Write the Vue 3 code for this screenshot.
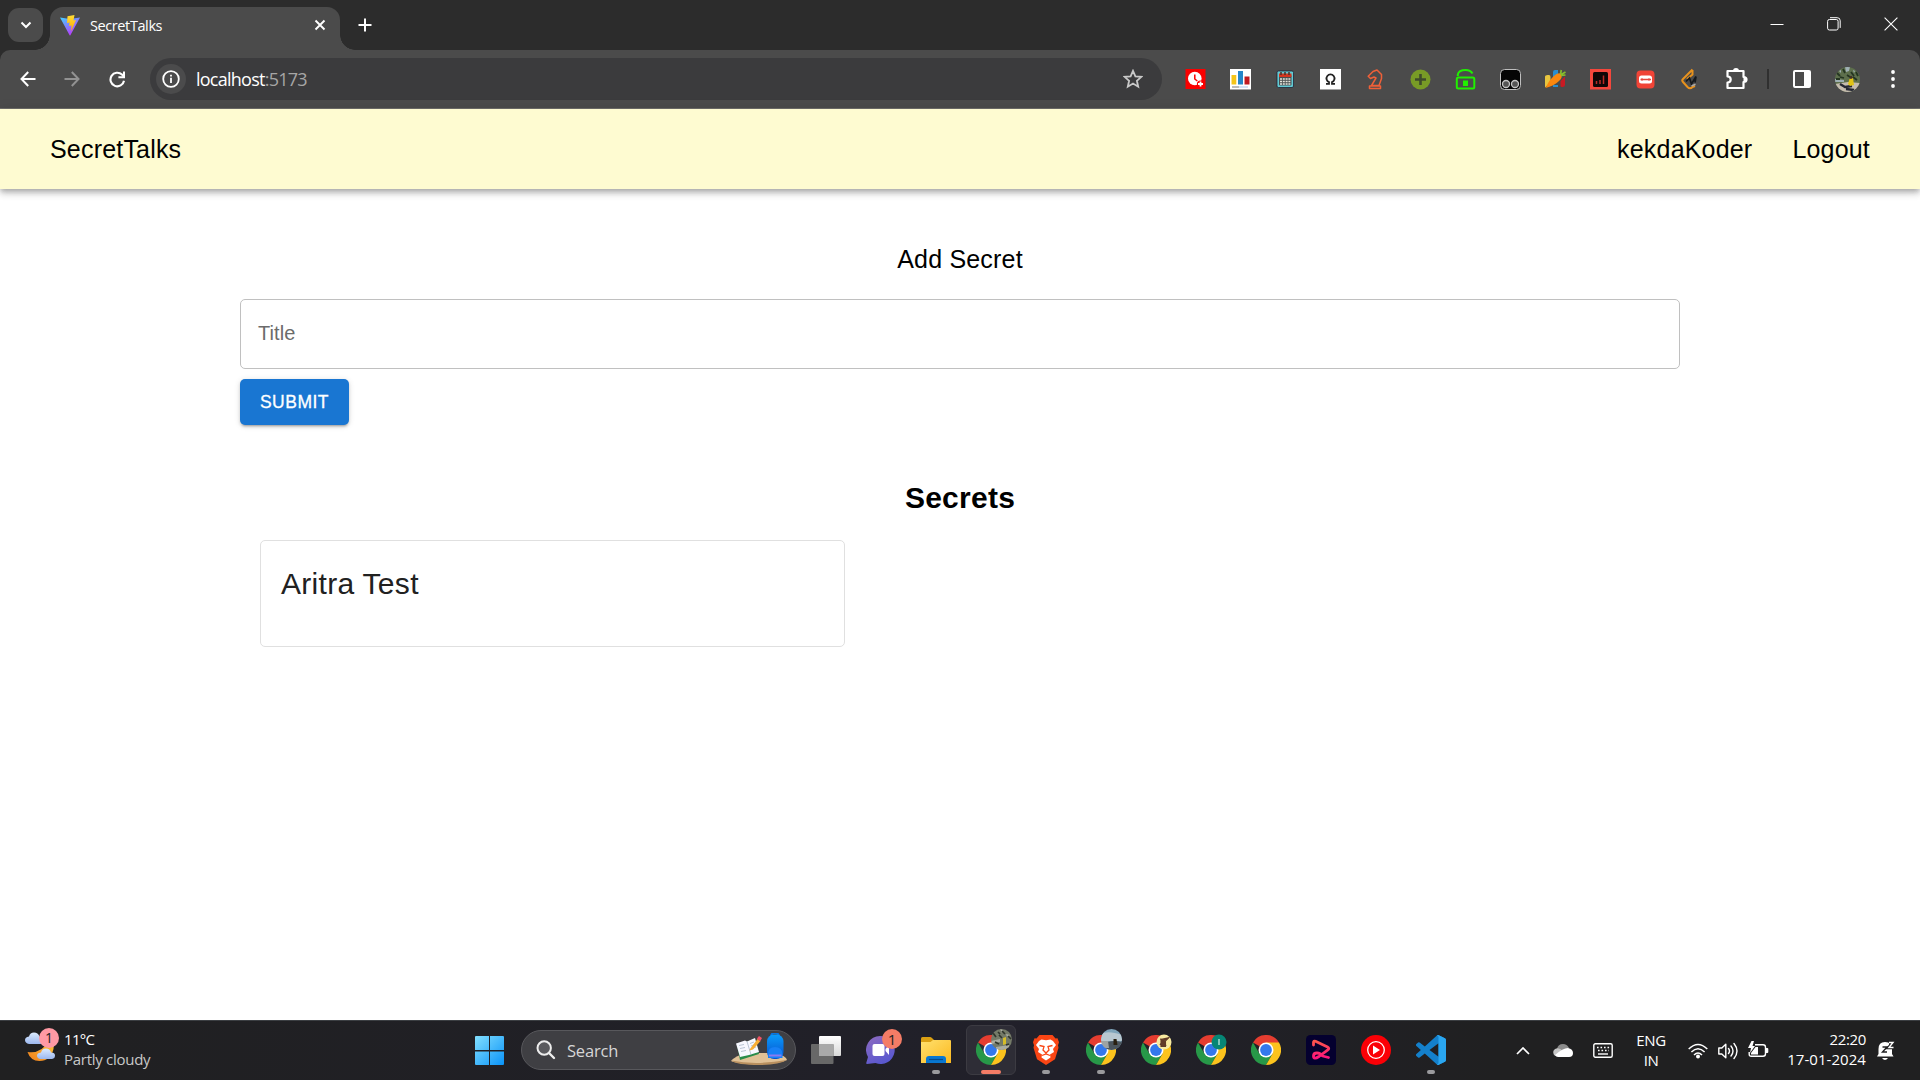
<script setup>
const tasks = [
  { id: 'view' },
  { id: 'chat' },
  { id: 'files', run: true },
  { id: 'chrome', badge: 'park', active: true },
  { id: 'brave', run: true },
  { id: 'chrome', badge: 'sky', run: true },
  { id: 'chrome', badge: 'cream' },
  { id: 'chrome', badge: 'teal' },
  { id: 'chrome' },
  { id: 'resso' },
  { id: 'ytm' },
  { id: 'code', run: true }
]
</script>

<template>
  <div class="screen">
    <header class="tabstrip">
      <button class="tabsearch">
        <svg width="12" height="8" viewBox="0 0 12 8"><path d="M1.500 1.500 6 6l4.500-4.500" fill="none" stroke="#fff" stroke-width="2" /></svg>
      </button>
      <div class="tab">
        <svg class="vite" width="20" height="21" viewBox="0 0 20 21">
          <defs>
            <linearGradient id="va" x1="0" y1="0" x2="0.6" y2="1"><stop offset="0" stop-color="#41d1ff" /><stop offset="1" stop-color="#bd34fe" /></linearGradient>
            <linearGradient id="vb" x1="0" y1="0" x2="0" y2="1"><stop offset="0" stop-color="#ffdd35" /><stop offset="1" stop-color="#ffa800" /></linearGradient>
          </defs>
          <path d="M0 2.500 10 4l10-1.500L10.400 20.300q-.4.600-.8 0z" fill="url(#va)" />
          <path d="M7.500 1.200 14.500 0l-1 5.500 2.500-.4-5 11.500.5-6-2.500.5.600-3.600-2.600.6z" fill="url(#vb)" />
        </svg>
        <span class="tabtitle">SecretTalks</span>
        <svg class="tabclose" width="12" height="12" viewBox="0 0 12 12"><path d="m1.500 1.500 9 9m0-9-9 9" stroke="#fff" stroke-width="1.900" /></svg>
      </div>
      <svg class="newtab" width="14" height="14" viewBox="0 0 14 14"><path d="M7 .5v13M.5 7h13" stroke="#fff" stroke-width="2" /></svg>
      <div class="winbtns">
        <svg width="14" height="14" viewBox="0 0 14 14"><path d="M.5 7.500h13" stroke="#fff" /></svg>
        <svg width="14" height="14" viewBox="0 0 14 14"><g fill="none" stroke="#fff"><rect x=".6" y="2.500" width="10.500" height="10.500" rx="1.800" /><path d="M3 .7h7.200q3 0 3 3v7.200" /></g></svg>
        <svg width="14" height="14" viewBox="0 0 14 14"><path d="m.6.600 12.800 12.800m0-12.800L.6 13.400" stroke="#fff" stroke-width="1.100" /></svg>
      </div>
    </header>

    <div class="toolbar">
      <svg class="back" width="16" height="16" viewBox="0 0 16 16"><path d="M15.500 8H2M8.200 1 1.500 8l6.700 7" fill="none" stroke="#fff" stroke-width="2" /></svg>
      <svg class="fwd" width="16" height="16" viewBox="0 0 16 16"><path d="M.5 8H14M7.800 1l6.700 7-6.700 7" fill="none" stroke="#929292" stroke-width="2" /></svg>
      <svg class="reload" width="17" height="17" viewBox="0 0 17 17"><path d="M15 9.700A6.800 6.800 0 1 1 13 3.600l2 2.100" fill="none" stroke="#fff" stroke-width="2.100" /><path d="M16 .5v6.700H9.400V5.200H14V.5z" fill="#fff" /></svg>
      <div class="omnibox">
        <span class="info">
          <svg width="18" height="18" viewBox="0 0 18 18"><circle cx="9" cy="9" r="7.800" fill="none" stroke="#fff" stroke-width="1.800" /><path d="M9 7.800V13M9 4.700v1.900" stroke="#fff" stroke-width="1.800" /></svg>
        </span>
        <span class="url">localhost<i>:5173</i></span>
        <svg class="star" width="20" height="20" viewBox="0 0 20 20"><path d="m10 1.800 2.400 5.500 6 .5-4.500 4 1.300 5.900L10 14.600l-5.200 3.100 1.300-5.900-4.500-4 6-.5z" fill="none" stroke="#c9c9c9" stroke-width="1.800" /></svg>
      </div>
      <div class="exts">
        <svg viewBox="0 0 24 24"><rect x="2.500" y="2" width="20" height="20" fill="#f90000" /><circle cx="11.800" cy="11.500" r="6.800" fill="#fff" /><path d="M11.800 7.500v4.500l2.500 2" fill="none" stroke="#f90000" stroke-width="1.500" /><circle cx="17.500" cy="17" r="3.600" fill="#f90000" /><path d="M17.500 14.500v5M15 17h5" stroke="#fff" stroke-width="1.800" /></svg>
        <svg viewBox="0 0 24 24"><rect x="2" y="2" width="21" height="20.500" fill="#fff" /><path d="M3.500 8h4.800v9.500H3.500z" fill="#f5c518" /><path d="M10 4h5v13.500h-5z" fill="#2586c9" /><path d="M16.500 9.500h5v8h-5z" fill="#c11a20" /><path d="M4 20h7" stroke="#777" /><path d="M11 20h9" stroke="#aac4ea" /></svg>
        <svg viewBox="0 0 24 24"><rect x="4" y="4" width="16.500" height="16.500" rx="1.500" fill="#62cbd4" stroke="#223" stroke-width=".8" /><rect x="6" y="8" width="12.500" height="10.500" rx="1" fill="#4b4f50" /><path d="M6 6.500h12.500v3.500H6z" fill="#d3361f" /><path d="M7 12h11M7 14.500h11M7 17h11" stroke="#e6e6dc" stroke-width="1.500" stroke-dasharray="2 .8" /><path d="M8 5v3m4-3v3m4-3v3" stroke="#48302a" stroke-width="1.500" /></svg>
        <svg viewBox="0 0 24 24"><rect x="2" y="2" width="21" height="20.500" fill="#fff" /><path d="M8 16.800h3v-1.700a4 4 0 1 1 3 0v1.700h3" fill="none" stroke="#222" stroke-width="1.800" /></svg>
        <svg viewBox="0 0 24 24"><path d="M6.500 21.500h11V19h-11zM8.500 18.500l4.500-7.500-2-1-3.500 1.500-2.300-2.300L10 4.500l4-1.500 4.500 4.500v4L16 18.500z" fill="none" stroke="#ef6038" stroke-width="1.500" stroke-linejoin="round" /></svg>
        <svg viewBox="0 0 24 24"><circle cx="12.500" cy="12.500" r="10" fill="#789b26" /><path d="M12.500 7v11M7 12.500h11" stroke="#3f4c2c" stroke-width="2.600" /></svg>
        <svg viewBox="0 0 24 24"><rect x="3.800" y="10.500" width="17.500" height="11" rx="1.500" fill="none" stroke="#20f000" stroke-width="2" /><path d="M4.800 9V7.500q1-4.500 7.700-4.500 5 0 7 3.500" fill="none" stroke="#20f000" stroke-width="2" /><path d="M10 13.500h5v5.500h-5z" fill="#20f000" /></svg>
        <svg viewBox="0 0 24 24"><rect x="2.500" y="2.500" width="20" height="20" rx="4" fill="#050505" stroke="#bfbfbf" /><g fill="#555" stroke="#c4c4c4" stroke-width="1.300"><circle cx="8" cy="17" r="3.500" /><circle cx="17" cy="17" r="3.500" /></g></svg>
        <svg viewBox="0 0 24 24"><path d="M2 9.500q0-2 4-1.500 1.500 0 1.500 2v6L2 20.500z" fill="#e8c53f" /><path d="M10 5q0-2 2-2h3v9l-5 4zM10 18h5v2h-5z" fill="#298dcf" /><path d="M17.500 14 22 9.500V18q0 2-2.500 2t-2-2z" fill="#c91a23" /><path d="M2.500 21Q7 11 13.500 7q4-2 5 1t-2.500 6q-5 5-13.500 7z" fill="#fa870e" /><path d="m17.500 7.500.8-4.500m0 4.500 4.200-2.500m-4.500 3.500 4.500-.5" stroke="#86bd2c" stroke-width="1.700" /></svg>
        <svg viewBox="0 0 24 24"><rect x="2" y="2" width="21" height="20.500" fill="#f4473c" /><rect x="5" y="5" width="15" height="15" rx="1.500" fill="#100707" /><path d="M8.500 14v3m3.500-4v4M15.500 8.500V17" stroke="#b92b26" stroke-width="1.500" /></svg>
        <svg viewBox="0 0 24 24"><rect x="3.500" y="3.500" width="18" height="18" rx="4" fill="#f04437" /><rect x="6" y="8.500" width="13" height="8" rx="2.500" fill="#fff" /><path d="M7.500 12.500H18M9 11.200v2.600m7-2.600v2.600" stroke="#e6483d" stroke-width="1.300" /></svg>
        <svg viewBox="0 0 24 24"><path d="m14.500 2.500-9.500 9.500q-1.500 1.500 0 3l4.500 5q2.500 2.500 5 0l2.500-1M14.500 3v4.500L9 12" fill="none" stroke="#e8921d" stroke-width="2" /><path d="m8 14.500 3.500-3.500 2 6 4.500-7.500-1 6" fill="none" stroke="#15191d" stroke-width="1.700" /><path d="m13.500 19 4-1.800" stroke="#aaa" stroke-width="1.500" /></svg>
        <svg class="ext-menu" viewBox="0 0 24 24"><path d="M3.500 4h16v6q3 0 3 2.500T19.500 15v6h-16v-5.500q3.200 0 3.200-3t-3.200-3z" fill="none" stroke="#fff" stroke-width="2.200" stroke-linejoin="round" /><path d="M9 4a3 3 0 0 1 6 0zm10.500 5.500a3 3 0 0 1 0 6z" fill="#fff" /></svg>
      </div>
      <span class="divider"></span>
      <svg class="panel" width="18" height="18" viewBox="0 0 18 18"><rect x="1" y="1" width="16" height="16" rx="1" fill="none" stroke="#fff" stroke-width="2" /><path d="M11 1h6v16h-6z" fill="#fff" /></svg>
      <svg class="avatar" width="25" height="25" viewBox="0 0 25 25">
        <defs><clipPath id="av"><circle cx="12.500" cy="12.500" r="12.500" /></clipPath></defs>
        <g clip-path="url(#av)"><path fill="#5d6f4c" d="M0 0h25v25H0z" /><path fill="#9fb0b4" d="m0 12 9 1v2H0zM10 0l5 0-1 4-3 1zm-6 4 2-1v3zm14-1 2 1-1 2z" /><path d="m2 6 3 3m3-7 2 4m6-1 3 4m2-4 2 4M5 10l4 1m3-3 3 2m3 0 4 3M1 12l4 0" stroke="#253522" stroke-width="1.800" /><path fill="#c5bcae" d="m0 17 13-2 12 1v9H0z" /><path d="m5 17 5 3 7-1m2 4-8-1" stroke="#252833" stroke-width="2.400" fill="none" /><path fill="#e0c315" d="m14.500 12 3.500-1 1 7-4 1-2-2z" /><circle cx="16" cy="10.300" r="1.500" fill="#443026" /></g>
      </svg>
      <svg class="dots" width="4" height="18" viewBox="0 0 4 18"><g fill="#fff"><circle cx="2" cy="2" r="1.900" /><circle cx="2" cy="9" r="1.900" /><circle cx="2" cy="16" r="1.900" /></g></svg>
    </div>

    <main class="page">
      <nav class="appbar">
        <span class="brand">SecretTalks</span>
        <span class="user">kekdaKoder</span>
        <span>Logout</span>
      </nav>
      <section class="form">
        <h2>Add Secret</h2>
        <div class="field">Title</div>
        <button class="submit">SUBMIT</button>
      </section>
      <section class="secrets">
        <h1>Secrets</h1>
        <article class="card">Aritra Test</article>
      </section>
    </main>

    <footer class="taskbar">
      <div class="weather">
        <svg width="36" height="38" viewBox="0 0 36 38">
          <defs>
            <linearGradient id="cl" x1="0" y1="0" x2="0" y2="1"><stop offset="0" stop-color="#dcebff" /><stop offset="1" stop-color="#9cb8ee" /></linearGradient>
            <linearGradient id="mo" x1="0" y1="1" x2="1" y2="0"><stop offset="0" stop-color="#f07e1b" /><stop offset="1" stop-color="#ffc63b" /></linearGradient>
          </defs>
          <path d="M2.500 26q14 2 21-11 6 0 5 8-3 12-14 12-9 0-12-9z" fill="url(#mo)" />
          <path d="M4 18q-4-1-4-4t4-3.500q1-4 5-4t5.500 4Q19 11 19 14.500T15 18z" fill="url(#cl)" />
          <path d="M15 33q-3-1-3-3.500t4-3q1-4 5-4t5 4q4 0 4 3T27 33z" fill="url(#cl)" />
        </svg>
        <b class="wbadge">1</b>
        <div class="wtext"><span>11°C</span><span class="dim">Partly cloudy</span></div>
      </div>

      <svg class="start" width="30" height="30" viewBox="0 0 30 30">
        <defs><linearGradient id="wn" x1="0" y1="0" x2="1" y2="1"><stop offset="0" stop-color="#82dfff" /><stop offset="1" stop-color="#0a93f8" /></linearGradient></defs>
        <path d="M1 0h13v14H0V1q0-1 1-1zM15 0h13q1 0 1 1v13H15zM0 15.500h14V29H1q-1 0-1-1zM15 15.500h14V28q0 1-1 1H15z" fill="url(#wn)" />
      </svg>

      <div class="search">
        <svg class="mag" width="20" height="20" viewBox="0 0 20 20"><circle cx="8.200" cy="8" r="6.700" fill="#5a5a5e" stroke="#ededed" stroke-width="2" /><path d="m13 13 5 5" stroke="#ededed" stroke-width="2.400" stroke-linecap="round" /></svg>
        <span>Search</span>
        <svg class="art" width="58" height="34" viewBox="0 0 58 34">
          <defs><linearGradient id="bp" x1="0" y1="0" x2="0" y2="1"><stop offset="0" stop-color="#0a9bfa" /><stop offset="1" stop-color="#0750cd" /></linearGradient></defs>
          <path d="M1 28q4-5 15-8h30q10 3 11 7-8 4-28 4-22 0-28-3z" fill="#e0c196" /><path d="M1 27.500q25 5 56-.5-8 5-28 5-22 0-28-4.500z" fill="#b9905f" />
          <path d="m7 12 18-6 4 15-19 6z" fill="#2a8c4a" /><path d="m6 10.500 9-3 2 1 8-3.500 4 14-10 3-9 2z" fill="#f7f8ff" /><path d="m17 8.500 4 13M9 12.500l5-1m-4 4 5-1m-4 4 5-1m4-7 4-1.500m-3 4 4-1.500m-3 4 4-1.500" stroke="#a9b7c9" stroke-width=".8" fill="none" />
          <path d="m20 16 7.500-10 3 2-7.500 8.500-3.500 1z" fill="#f9ae34" /><path d="m27 5.500 2-2.500 3 2-2 3.500z" fill="#ee5365" />
          <path d="M41 4q0-4 4-4t4 4" fill="none" stroke="#0875e5" stroke-width="2" /><rect x="37" y="1.500" width="16.500" height="24.500" rx="7" fill="url(#bp)" /><path d="M38 21q0-7 7-7t7.500 7v4H38z" fill="#1780f5" /><path d="M39 21.500h12.500v2H39z" fill="#8a7af0" />
        </svg>
      </div>

      <div class="tasks">
        <div v-for="(t, i) in tasks" :key="i" class="cell">
          <div class="tile" :class="{ on: t.active }">
            <svg v-if="t.id === 'view'" width="30" height="30" viewBox="0 0 30 30">
              <defs><linearGradient id="tv" x1="0" y1="0" x2="0" y2="1"><stop offset="0" stop-color="#fff" /><stop offset="1" stop-color="#d8d8d8" /></linearGradient></defs>
              <rect x="8" y="1" width="22" height="20" rx="1" fill="url(#tv)" /><rect x="0" y="9" width="22.500" height="20" rx="1" fill="#686868" /><path d="M8 9h14.500v12H8z" fill="#a9a9a9" />
            </svg>
            <svg v-else-if="t.id === 'chat'" width="30" height="30" viewBox="0 0 30 30">
              <defs><linearGradient id="ct" x1="0" y1="0" x2="0.500" y2="1"><stop offset="0" stop-color="#8e6bc0" /><stop offset="1" stop-color="#5a58cf" /></linearGradient></defs>
              <path d="M14.500 1a14 14 0 1 1-5 27L1 29q-1 0-.7-1.200L2 22A14 14 0 0 1 14.500 1z" fill="url(#ct)" /><rect x="6.500" y="9" width="12" height="12" rx="2" fill="#fff" /><path d="m19.500 14 3.500-4v10l-3.500-4z" fill="#fff" />
            </svg>
            <svg v-else-if="t.id === 'files'" width="30" height="30" viewBox="0 0 30 30">
              <defs><linearGradient id="fo" x1="0" y1="0" x2="1" y2="1"><stop offset="0" stop-color="#ffe06e" /><stop offset="1" stop-color="#fbb91f" /></linearGradient></defs>
              <path d="M0 3.500q0-1.500 1.500-1.500H9q1 0 2 1l2 2v5H0z" fill="#dba013" /><path d="M0 7h9.500l2.500-2h17q1 0 1 1v22H0z" fill="url(#fo)" /><path d="M5 28v-4q0-3 3-3h14q3 0 3 3v4z" fill="#0877d1" /><path d="M8 24.500h14" stroke="#064b8c" stroke-width="1.200" />
            </svg>
            <svg v-else-if="t.id === 'brave'" width="30" height="30" viewBox="0 0 30 30">
              <path d="M8.500 0h13l3 3.500 2-.2 1.500 4-1 3 .5 2.500-3.500 11.500-9 5.700-9-5.700L2.500 12.800l.5-2.500-1-3 1.500-4 2 .2z" fill="#fa4514" /><path d="m10.500 4.500 4.500.8 4.500-.8 2.500 1.500 3 4-3 4 1 3-4 2.500.5 3L15 25.500l-4.500-3 .5-3L7 17l1-3-3-4 3-4z" fill="#fff" /><path d="m8.500 10.500 4.500 1-1 3.500 3 3 3-3-1-3.500 4.500-1M11 20.500l4-1.500 4 1.500" fill="none" stroke="#fa4514" stroke-width="1.300" />
            </svg>
            <svg v-else-if="t.id === 'chrome'" width="30" height="30" viewBox="0 0 30 30">
              <path d="M15 15 2 7.500A15 15 0 0 1 28 7.500z" fill="#e53d30" /><path d="M2 7.500A15 15 0 0 0 15 30l6.500-11.200L15 15 8.500 18.800z" fill="#279848" /><path d="M15 7.500h13A15 15 0 0 1 15 30l6.500-11.200z" fill="#fcc31d" /><circle cx="15" cy="15" r="7.500" fill="#fff" /><circle cx="15" cy="15" r="5.900" fill="#3478ec" />
            </svg>
            <svg v-else-if="t.id === 'resso'" width="30" height="30" viewBox="0 0 30 30">
              <defs><linearGradient id="rs" x1="0" y1="0" x2="0" y2="1"><stop offset="0" stop-color="#fb554c" /><stop offset="1" stop-color="#ff147c" /></linearGradient></defs>
              <rect width="30" height="30" rx="4.500" fill="#04002f" /><path d="M7.500 10V7.500q0-2 2-1.200L21.500 12q2.500 1.300 0 3.200L13 21.500q-5.500 3.500-5.500-.5 0-3 3.500-3 3.500 0 5.500 3l6 1.500" fill="none" stroke="url(#rs)" stroke-width="2.800" stroke-linecap="round" stroke-linejoin="round" />
            </svg>
            <svg v-else-if="t.id === 'ytm'" width="30" height="30" viewBox="0 0 30 30">
              <circle cx="15" cy="15" r="15" fill="#fb0006" /><circle cx="15" cy="15" r="8.300" fill="none" stroke="#fff" stroke-width="1.300" /><path d="M12 10.500v9l7-4.500z" fill="#fff" />
            </svg>
            <svg v-else width="30" height="30" viewBox="0 0 24 24">
              <path d="M23.150 2.587 18.210.210a1.494 1.494 0 0 0-1.705.290l-9.460 8.630-4.120-3.128a.999.999 0 0 0-1.276.057L.327 7.261A1 1 0 0 0 .326 8.740L3.899 12 .326 15.260a1 1 0 0 0 .001 1.479L1.650 17.940a.999.999 0 0 0 1.276.057l4.120-3.128 9.460 8.630a1.492 1.492 0 0 0 1.704.290l4.942-2.377A1.500 1.500 0 0 0 24 20.060V3.939a1.500 1.500 0 0 0-.850-1.352zM18.004 17.448 10.826 12l7.178-5.448z" fill="#1480cb" />
              <path d="M18.210.210q-.8-.300-1.500.1 1.294.2 1.294 1.500v20.400q0 1.200-1.294 1.500.7.400 1.500.080l4.942-2.377Q24 21 24 20.060V3.939q0-.9-.85-1.352z" fill="#2aa6f0" />
            </svg>

            <b v-if="t.id === 'chat'" class="chatbadge">1</b>
            <svg v-if="t.badge" class="pbadge" :class="t.badge" width="21" height="21" viewBox="0 0 21 21">
              <defs><clipPath id="pb"><circle cx="10.500" cy="10.500" r="10.500" /></clipPath></defs>
              <g v-if="t.badge === 'park'" clip-path="url(#pb)"><path fill="#747a68" d="M0 0h21v21H0z" /><path fill="#a9aba0" d="m0 12 9-2v3l-8 2zm5 6 13-2v5H5zM9 0l3 1-1 3zm6 5 4 1-3 2z" /><path d="m2 4 3 4m-1 5 4 2M11 2l3 3m-6 1 3 3m4 7 3-1m-1-8 3 3M7 3l2 2" stroke="#30352c" stroke-width="1.700" /><path fill="#d6bd27" d="m12 9 3-1v7l-3 1z" /></g>
              <g v-else-if="t.badge === 'sky'" clip-path="url(#pb)"><path fill="#7fa5bb" d="M0 0h21v21H0z" /><path fill="#b8c8d1" d="M0 5q7-4 21 1v6H0z" /><path fill="#4b555d" d="M6 13q8-2 15 0l-3 8H4z" /><path fill="#9da3a3" d="M0 12h7l1 7H0z" /><path fill="#292011" d="m12.500 10 3 0 1 6h-4z" /></g>
              <template v-else-if="t.badge === 'cream'"><circle cx="8" cy="8" r="7.500" fill="#f8eaa1" /><path d="M5 6h4.500v6.500H5zM4 5l6 1.500 3.500-3.500M4 11l1-2m5 3-1-3" fill="#623b28" stroke="#623b28" stroke-width="1.100" /></template>
              <template v-else><circle cx="8" cy="8" r="7.500" fill="#068675" /><path d="M8 5v6" stroke="#bde8df" stroke-width="1.300" /></template>
            </svg>
            <i v-if="t.run || t.active" class="dash" :class="{ wide: t.active }"></i>
          </div>
        </div>
      </div>

      <div class="tray">
        <svg class="chev" width="14" height="8" viewBox="0 0 14 8"><path d="m1 7 6-6 6 6" fill="none" stroke="#fff" stroke-width="1.700" /></svg>
        <svg class="cloud" width="20" height="13" viewBox="0 0 20 13"><path d="M4 5q1-5 6-5 4 0 6 4l-8 6z" fill="#8b8b8b" /><path d="M1 11Q-1 7 2 5q4-2 8 2l5 5H4q-2 0-3-1z" fill="#c5c5c5" /><path d="M2 11q8-7 13-7 5 1 5 5 0 4-4 4H5q-2 0-3-2z" fill="#fff" /></svg>
        <svg class="kb" width="20" height="15" viewBox="0 0 20 15"><rect x=".8" y=".8" width="18.400" height="13.400" rx="1.500" fill="none" stroke="#fff" stroke-width="1.400" /><path d="M4 4.500h13M5 7.500h11" stroke="#fff" stroke-width="1.600" stroke-dasharray="1.600 1.900" /><path d="M5 11h10" stroke="#fff" stroke-width="1.400" /></svg>
        <div class="lang"><span>ENG</span><span>IN</span></div>
        <svg class="wifi" width="20" height="16" viewBox="0 0 20 16"><g fill="none" stroke="#fff" stroke-width="1.500"><path d="M.7 6q9.300-9 18.600 0M3.400 9q6.600-6.500 13.200 0M6 12q4-4 8 0" /></g><circle cx="10" cy="13.500" r="2" fill="#fff" /></svg>
        <svg class="vol" width="20" height="18" viewBox="0 0 20 18"><g fill="none" stroke="#fff" stroke-width="1.400"><path d="M.8 6v6h3l4 3.800V2.200L3.800 6z" stroke-linejoin="round" /><path d="M10.500 6.500q2 2.500 0 5M13 4q4 5 0 10m3-12.500q6 7.500 0 15" stroke-linecap="round" /></g></svg>
        <svg class="bat" width="21" height="17" viewBox="0 0 21 17"><path d="M7 3.700h8q2.500 0 2.500 2.500v6.500q0 2.500-2.500 2.500H3.200q-2 0-2-2V11" fill="none" stroke="#fff" stroke-width="1.400" /><path d="M18 7h1.300q1 0 1 1v3q0 1-1 1H18zM3 13.500V12l4.500-6H10v7.500z" fill="#fff" /><path d="M3.500 0 0 7h3L2 12l5-7H4.500L6 0z" fill="#fff" /></svg>
        <div class="clock"><span>22:20</span><span class="date">17-01-2024</span></div>
        <svg class="bell" width="18" height="20" viewBox="0 0 18 20"><path d="M1.500 13V8q0-7 6.500-7 7 0 7 7v5l1.500 2.500H0zM5 17h6q-3 4-6 0z" fill="#fff" /><path d="M5.500 6h4.500l-4.500 5H10" fill="none" stroke="#202022" stroke-width="1.400" /><path d="M12 2h4l-4 4.500h4" fill="none" stroke="#202022" stroke-width="3.600" /><path d="M12 1.500h4L12 6.500h4.500" fill="none" stroke="#fff" stroke-width="1.400" /></svg>
      </div>
    </footer>
  </div>
</template>

<style>
body { overflow: hidden; background: #fff; }
</style>

<style scoped>
* { box-sizing: border-box; }
svg { display: block; flex: none; }
button { border: 0; padding: 0; }
.screen { width: 1920px; height: 1080px; display: flex; flex-direction: column; background: linear-gradient(#2c2c2c 70px, #fff 70px); font-family: "Open Sans", "Noto Sans", sans-serif; }

.tabstrip { height: 50px; flex: none; display: flex; background: #2c2c2c; }
.tabsearch { width: 35px; height: 34px; margin: 8px 0 0 8px; border-radius: 11px; background: #4b4b4b; display: flex; align-items: center; justify-content: center; }
.tab { position: relative; width: 290px; height: 43px; margin: 7px 0 0 7px; padding: 0 14px 7px 10px; border-radius: 13px 13px 0 0; background: #4b4b4b; display: flex; align-items: center; }
.tab::before, .tab::after { content: ""; position: absolute; bottom: 0; width: 15px; height: 15px; }
.tab::before { left: -15px; background: radial-gradient(circle at 0 0, transparent 14.500px, #4b4b4b 15px); }
.tab::after { right: -15px; background: radial-gradient(circle at 100% 0, transparent 14.500px, #4b4b4b 15px); }
.tabtitle { position: relative; top: 1px; margin-left: 10px; flex: 1; color: #fff; font-size: 14.500px; letter-spacing: -0.400px; line-height: 20px; }
.newtab { margin: 18px 0 0 18px; }
.winbtns { margin-left: auto; padding: 17px 22px 0 0; display: flex; gap: 43px; }

.toolbar { height: 59px; flex: none; display: flex; align-items: center; background: #4b4b4b; border-bottom: 1px solid #706f6c; border-radius: 10px 10px 0 0; }
.back { margin-left: 20px; }
.fwd { margin-left: 28px; }
.reload { margin-left: 29px; }
.omnibox { width: 1012px; height: 42px; margin-left: 24px; padding: 0 19px 0 6px; border-radius: 21px; background: #3b3b3d; display: flex; align-items: center; }
.info { width: 30px; height: 30px; border-radius: 50%; background: #4b4b4c; display: flex; align-items: center; justify-content: center; }
.url { flex: 1; margin-left: 10px; color: #fff; font-size: 18px; letter-spacing: -0.750px; line-height: 26px; }
.url i { font-style: normal; color: #a6a6a6; }
.exts { display: flex; margin-left: 10px; }
.exts svg { width: 24px; height: 24px; margin: 0 10.500px; }
.exts .ext-menu { margin: 0 9.500px 0 11.500px; }
.divider { width: 2px; height: 20px; margin-left: 10px; background: #303030; }
.panel { margin-left: 24px; }
.avatar { margin-left: 24px; }
.dots { margin-left: 31px; }

.page { height: 911px; flex: none; background: #fff; font-family: "Liberation Sans", Arial, sans-serif; display: flex; flex-direction: column; }
.appbar { height: 80px; flex: none; padding: 0 50px; display: flex; align-items: center; background: #fefbd1; box-shadow: 0 2.500px 5px -1px rgba(0,0,0,.2), 0 5px 6px rgba(0,0,0,.14), 0 1px 12px rgba(0,0,0,.12); font-size: 25px; letter-spacing: 0.190px; line-height: 40px; color: #000; }
.brand { flex: 1; }
.user { margin-right: 40px; }
.form { width: 1440px; margin: 50px auto 0; display: flex; flex-direction: column; }
h2 { margin: 0; font-size: 25px; font-weight: 400; line-height: 40px; letter-spacing: 0.190px; text-align: center; }
.field { height: 70px; margin-top: 20px; padding: 0 17px; border: 1px solid #c0c0c0; border-radius: 5px; color: #6b6b6b; font-size: 20px; letter-spacing: 0.100px; line-height: 66px; }
.submit { width: 109px; height: 46px; margin-top: 10px; border-radius: 5px; background: #1976d2; color: #fff; font: 500 17.500px/46px "Liberation Sans", Arial, sans-serif; letter-spacing: 0.500px; -webkit-text-stroke: 0.300px #fff; box-shadow: 0 3px 2px -2px rgba(0,0,0,.2), 0 2px 3px rgba(0,0,0,.14), 0 1px 6px rgba(0,0,0,.12); }
.secrets { width: 1440px; margin: 50px auto 0; padding: 0 20px; display: flex; flex-direction: column; }
h1 { margin: 0; font-size: 30px; font-weight: 700; line-height: 45px; letter-spacing: 0.250px; text-align: center; }
.card { width: 585px; height: 107px; margin-top: 20px; padding: 20px; border: 1px solid #e0e0e0; border-radius: 5px; font-size: 30px; line-height: 45px; letter-spacing: 0.300px; color: #212121; }

.taskbar { height: 60px; flex: none; background: linear-gradient(90deg, #202021, #21202a 55%, #202021 78%); border-top: 1px solid #3b3e42; display: flex; color: #fff; }
.weather { position: relative; width: 449px; padding: 8px 0 0 25px; display: flex; }
.weather > svg { margin-top: -3px; }
.wbadge { position: absolute; left: 39px; top: 7px; width: 20px; height: 20px; border-radius: 50%; background: #ff99a4; color: #222; font-size: 14px; line-height: 20px; font-weight: 400; text-align: center; }
.wtext { margin-left: 3px; display: flex; flex-direction: column; font-size: 15px; line-height: 20px; letter-spacing: -0.700px; }
.dim { color: #c8c8c8; letter-spacing: -0.280px; }
.start { margin: 15px 0 0 26px; }
.search { width: 275px; height: 40px; margin: 9px 0 0 16px; padding: 0 7px 0 14px; border: 1px solid #58585c; border-radius: 20px; background: #3f3f43; display: flex; align-items: center; }
.search span { flex: 1; margin-left: 11px; color: #d6d6d6; font-size: 16.500px; letter-spacing: -0.200px; }
.tasks { display: flex; margin-left: 2.500px; }
.cell { width: 55px; display: flex; justify-content: center; }
.tile { position: relative; width: 50px; height: 50px; margin-top: 4px; display: flex; justify-content: center; padding-top: 10px; }
.tile.on { padding-top: 9px; border: 1px solid #3c3b42; border-radius: 6px; background: #2e2d36; }
.chatbadge { position: absolute; left: 26px; top: 4px; width: 20px; height: 20px; border-radius: 50%; background: #f47c66; color: #222; font-size: 15px; line-height: 20px; font-weight: 400; text-align: center; }
.pbadge { position: absolute; left: 25px; top: 4px; }
.pbadge.park { left: 24px; top: 3px; }
.pbadge.cream, .pbadge.teal { top: 9px; }
.dash { position: absolute; left: 21px; top: 45px; width: 8px; height: 4px; border-radius: 2px; background: #9a9a9d; }
.dash.wide { left: 14px; top: 44px; width: 20px; background: #f47c66; }
.tray { margin-left: auto; width: 415px; height: 59px; display: flex; align-items: center; font-size: 15px; line-height: 20px; }
.chev { margin-left: 11px; }
.cloud { margin-left: 23px; }
.kb { margin-left: 20px; }
.lang { width: 36px; margin: -2px 0 0 20px; display: flex; flex-direction: column; align-items: center; letter-spacing: -0.400px; }
.wifi { margin-left: 19px; }
.vol { margin-left: 10px; }
.bat { margin-left: 10px; margin-top: -3px; }
.clock { width: 88px; margin: -3px 0 0 9px; display: flex; flex-direction: column; align-items: flex-end; letter-spacing: -0.350px; white-space: nowrap; }
.date { letter-spacing: 0.050px; }
.bell { margin-left: 11px; }
</style>
